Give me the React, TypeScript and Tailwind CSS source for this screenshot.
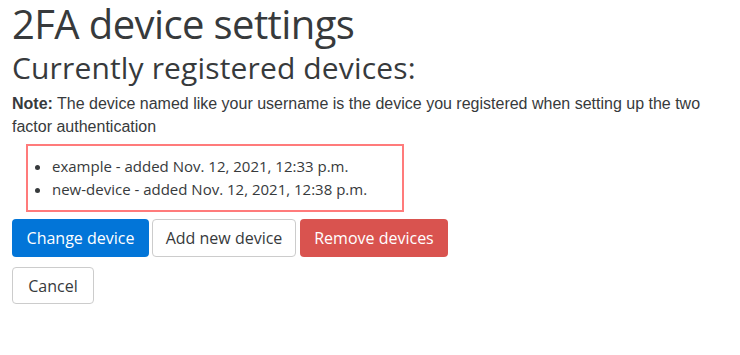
export default function App() {
  const devices = [
    'example - added Nov. 12, 2021, 12:33 p.m.',
    'new-device - added Nov. 12, 2021, 12:38 p.m.',
  ]

  return (
    <div className="min-h-[355px] bg-white px-3 text-[#373a3c] font-['Open_Sans',sans-serif]">
      <h1 className="text-[40px] leading-[48px] tracking-[-0.6px]">2FA device settings</h1>
      <h2 className="mt-[2px] text-[30px] leading-[36px] tracking-[0.15px]">
        Currently registered devices:
      </h2>

      <p className="mt-[6px] text-[16px] leading-[23px] font-['Liberation_Sans_Narrow',sans-serif]">
        <strong>Note:</strong> The device named like your username is the device you registered when
        setting up the two factor authentication
      </p>

      <ul className="ml-[14px] mt-[6px] w-[378px] border-2 border-[#ff7b7b] py-[9px] pl-[24px] list-disc text-[15px] leading-[23px]">
        {devices.map((d) => (
          <li key={d}>{d}</li>
        ))}
      </ul>

      <div className="mt-[7px] flex">
        <button className="h-[38px] w-[137px] rounded-[4px] bg-[#0275d8] text-[16px] text-white">
          Change device
        </button>
        <button className="ml-[3px] h-[38px] w-[144px] rounded-[4px] border border-[#ccc] bg-white text-[16px]">
          Add new device
        </button>
        <button className="ml-[4px] h-[38px] w-[148px] rounded-[4px] bg-[#d9534f] text-[16px] text-white">
          Remove devices
        </button>
      </div>

      <div className="mt-[10px]">
        <button className="h-[37px] w-[82px] rounded-[4px] border border-[#ccc] bg-white text-[16px]">
          Cancel
        </button>
      </div>
    </div>
  )
}
